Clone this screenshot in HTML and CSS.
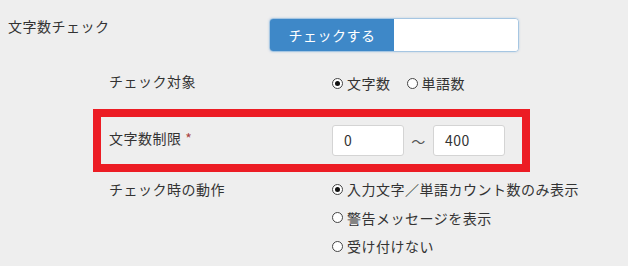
FILE: index.html
```html
<!DOCTYPE html>
<html lang="ja">
<head>
    <meta charset="UTF-8">
    <meta name="viewport" content="width=device-width, initial-scale=1.0">
    <title>文字数チェック</title>
    <link rel="stylesheet" href="styles.css">
</head>
<body>
    <div class="settings">
        <div class="main-row">
            <div class="main-label">文字数チェック</div>
            <div class="toggle">
                <span class="toggle-on">チェックする</span>
                <span class="toggle-off"></span>
            </div>
        </div>

        <div class="sub-row target-row">
            <div class="sub-label">チェック対象</div>
            <div class="radios inline">
                <label class="radio"><span class="dot checked"></span>文字数</label>
                <label class="radio"><span class="dot"></span>単語数</label>
            </div>
        </div>

        <div class="highlight">
            <div class="sub-row limit-row">
                <div class="sub-label">文字数制限 <span class="required">*</span></div>
                <div class="range">
                    <div class="num-input">0</div>
                    <span class="tilde">〜</span>
                    <div class="num-input">400</div>
                </div>
            </div>
        </div>

        <div class="sub-row action-row">
            <div class="sub-label">チェック時の動作</div>
            <div class="radios stacked">
                <label class="radio"><span class="dot checked"></span>入力文字／単語カウント数のみ表示</label>
                <label class="radio"><span class="dot"></span>警告メッセージを表示</label>
                <label class="radio"><span class="dot"></span>受け付けない</label>
            </div>
        </div>
    </div>
</body>
</html>
```

FILE: styles.css
```css
/* 全体 */
body {
    margin: 0;
    background: #eeeeee;
    color: #333;
    font-family: "Noto Sans CJK JP", "Noto Sans", sans-serif;
    font-size: 14px;
    letter-spacing: 0.5px;
}

.settings {
    padding: 16px 0 0 8px;
}

/* 文字数チェック */
.main-row {
    display: flex;
    align-items: flex-start;
}

.main-label {
    width: 261px;
    line-height: 20px;
}

.toggle {
    display: flex;
    width: 248px;
    height: 32px;
    margin-top: 2px;
    border: 1px solid #a6c6e2;
    border-radius: 4px;
    overflow: hidden;
    box-shadow: 0 0 2px rgba(120, 170, 215, 0.5);
}

.toggle-on {
    width: 124px;
    background: #3e88c8;
    color: #fff;
    text-align: center;
    line-height: 32px;
}

.toggle-off {
    flex: 1;
    background: #fff;
}

/* 各設定行 */
.sub-row {
    display: flex;
    align-items: flex-start;
    margin-left: 101px;
}

.sub-label {
    width: 223px;
    line-height: 20px;
}

.target-row {
    margin-top: 19px;
}

.target-row .radios {
    padding-top: 2px;
}

.required {
    color: #a94442;
}

.radios.inline {
    display: flex;
    gap: 16px;
    line-height: 20px;
}

.radios.stacked {
    display: flex;
    flex-direction: column;
    line-height: 28.5px;
}

.radio {
    display: flex;
    align-items: center;
}

.dot {
    box-sizing: border-box;
    width: 11px;
    height: 11px;
    margin-right: 4px;
    border: 1px solid #444;
    border-radius: 50%;
    background: #fff;
    position: relative;
}

.dot.checked::after {
    content: "";
    position: absolute;
    left: 2px;
    top: 2px;
    width: 5px;
    height: 5px;
    border-radius: 50%;
    background: #111;
}

/* 赤枠 */
.highlight {
    margin: 16px 0 0 85px;
    width: 421px;
    border: 8px solid #ec1c24;
}

.limit-row {
    margin-left: 0;
    padding: 8px 0 8px 8px;
}

.limit-row .sub-label {
    padding-top: 3px;
}

.range {
    display: flex;
    align-items: center;
}

.num-input {
    box-sizing: border-box;
    width: 72px;
    height: 31px;
    padding-left: 11px;
    border: 1px solid #d4d4d4;
    border-radius: 3px;
    background: #fff;
    line-height: 29px;
}

.tilde {
    width: 29px;
    text-align: center;
    color: #555;
}

.action-row {
    margin-top: 3px;
}

.action-row .sub-label {
    line-height: 28px;
}
```
